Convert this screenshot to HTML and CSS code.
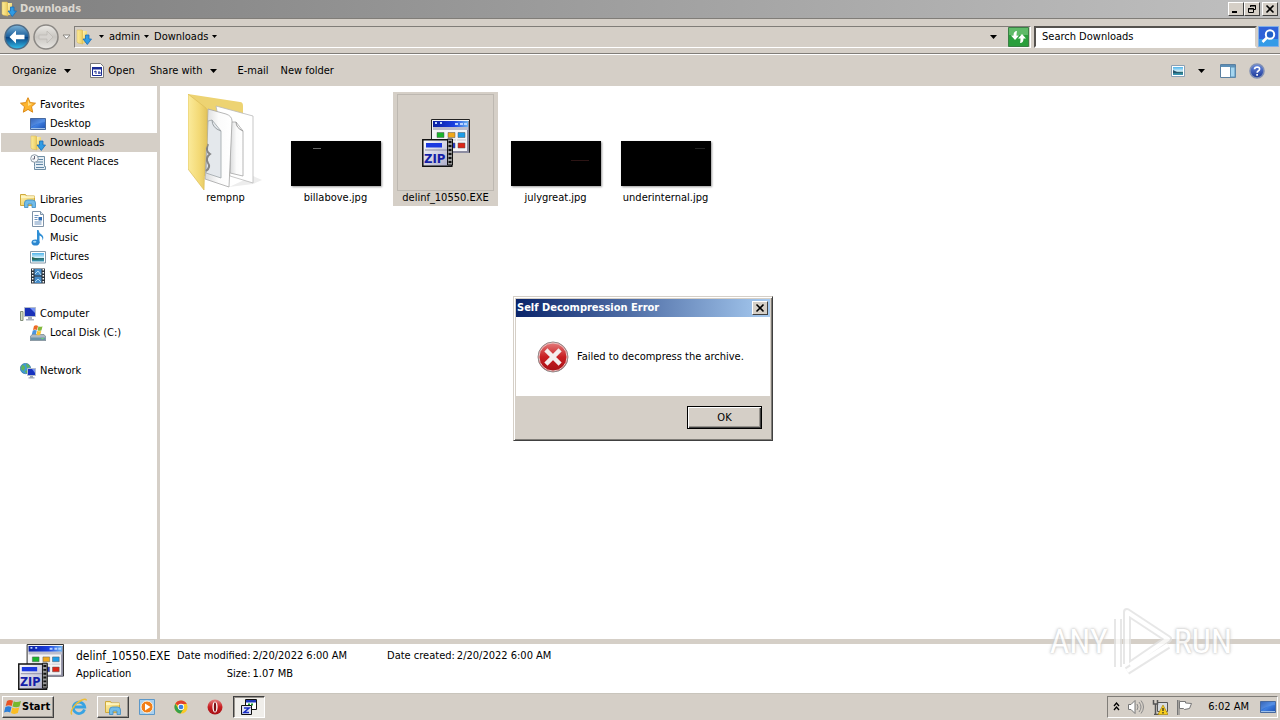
FILE: index.html
```
<!DOCTYPE html>
<html lang="en">
<head>
<meta charset="utf-8">
<title>Downloads</title>
<link rel="stylesheet" href="styles.css">
</head>
<body>
<svg class="sprite" width="0" height="0" aria-hidden="true">
  <defs>
    <linearGradient id="gFolder" x1="0" y1="0" x2="1" y2="1"><stop offset="0" stop-color="#fff3b0"/><stop offset="1" stop-color="#e6c04a"/></linearGradient>
    <linearGradient id="gFlap" x1="0" y1="0" x2="1" y2="0"><stop offset="0" stop-color="#fbeb9c"/><stop offset=".6" stop-color="#f3d975"/><stop offset="1" stop-color="#e3c45c"/></linearGradient>
    <linearGradient id="gPage" x1="0" y1="0" x2="1" y2="0"><stop offset="0" stop-color="#d9dadb"/><stop offset=".5" stop-color="#fbfbfb"/><stop offset="1" stop-color="#fff"/></linearGradient>
    <linearGradient id="gScreen" x1="0" y1="0" x2="1" y2="1"><stop offset="0" stop-color="#123c96"/><stop offset=".5" stop-color="#3f7fe0"/><stop offset="1" stop-color="#1a4db0"/></linearGradient>
    <linearGradient id="gGlobe" x1="0" y1="0" x2="0" y2="1"><stop offset="0" stop-color="#7db4d8"/><stop offset=".48" stop-color="#1c5f9c"/><stop offset=".52" stop-color="#0a4484"/><stop offset="1" stop-color="#35c2ee"/></linearGradient>
    <linearGradient id="gGrey" x1="0" y1="0" x2="0" y2="1"><stop offset="0" stop-color="#eceae6"/><stop offset=".5" stop-color="#c9c6c1"/><stop offset="1" stop-color="#e9e7e3"/></linearGradient>
    <linearGradient id="gBar" x1="0" y1="0" x2="1" y2="0"><stop offset="0" stop-color="#0a1fa0"/><stop offset=".6" stop-color="#1a3fe0"/><stop offset="1" stop-color="#6db4f0"/></linearGradient>
    <linearGradient id="gZip" x1="0" y1="0" x2="1" y2="1"><stop offset="0" stop-color="#fff"/><stop offset="1" stop-color="#a5a5c4"/></linearGradient>
    <linearGradient id="gRed" x1="0" y1="0" x2="0" y2="1"><stop offset="0" stop-color="#e58080"/><stop offset=".5" stop-color="#c81e22"/><stop offset="1" stop-color="#a50f14"/></linearGradient>
    <linearGradient id="gSky" x1="0" y1="0" x2="0" y2="1"><stop offset="0" stop-color="#4fb4ea"/><stop offset=".55" stop-color="#d8f1fa"/><stop offset=".6" stop-color="#2b6c6a"/><stop offset="1" stop-color="#3a9cc0"/></linearGradient>
    <linearGradient id="gHelp" x1="0" y1="0" x2="0" y2="1"><stop offset="0" stop-color="#6a8be0"/><stop offset="1" stop-color="#1b3796"/></linearGradient>
  </defs>
  <symbol id="i-down" viewBox="0 0 16 16"><path d="M1 1h5l1 1v13l-5-1-1-1z" fill="url(#gFlap)" stroke="#d9b64c" stroke-width=".5"/><path d="M7 2h4v12H7z" fill="url(#gFolder)"/><path d="M9.500 6h3.500v4h2.500L11.300 15.500 7 10h2.500z" fill="#2f9be4" stroke="#1b6db6" stroke-width=".8"/></symbol>
  <symbol id="i-star" viewBox="0 0 16 16"><path d="M8 .7l2.200 4.900 5.300.6-4 3.500 1.200 5.500L8 12.400l-4.700 2.800 1.200-5.500-4-3.500 5.300-.6z" fill="#fdb52e" stroke="#dc8a18"/><path d="M8 3l1.500 3.400 3 .4L8 9z" fill="#ffe08a"/></symbol>
  <symbol id="i-desk" viewBox="0 0 16 16"><path d="M.5 2.500h15v11H.5z" fill="url(#gScreen)" stroke="#47699f"/><path d="M1 12h14v1H1z" fill="#9fc0e8"/><path d="M1 3h14v3Q6 7 1 11z" fill="#7fb0f0" opacity=".35"/></symbol>
  <symbol id="i-recent" viewBox="0 0 16 16"><path d="M4.500 2.500h10v10h1v3h-11v-3z" fill="#e4edf4" stroke="#6f8ea5"/><path d="M6 8h7M6 10.500h7M8 5.500h5M6 13.500h8" stroke="#5f86a5"/><circle cx="4.500" cy="4.500" r="3.800" fill="#f7f9fb" stroke="#8d9aa5"/><path d="M4.500 2v3H2.500" fill="none" stroke="#667"/></symbol>
  <symbol id="i-lib" viewBox="0 0 16 16"><path d="M.5 13.500v-11h5l1 1.500h8v9.500z" fill="url(#gFolder)" stroke="#cfa93c"/><path d="M1 5h13.500" stroke="#fff8cc" stroke-width="1.500"/><path d="M4.500 15.500V11q0-3 3-3h5q3 0 3 3v4.500H12V12H8v3.500z" fill="#72bce8" stroke="#3f8cc4" stroke-width=".8"/></symbol>
  <symbol id="i-doc" viewBox="0 0 16 16"><path d="M2.500.5h8l3 3v12h-11z" fill="#fff" stroke="#7f93a8"/><path d="M10.500.5v3h3" fill="#d8e4ee" stroke="#7f93a8"/><path d="M4.500 4.500h4M4.500 6.500h3M4.500 8.500h3M4.500 11h7M4.500 13h7" stroke="#6f93bd"/><path d="M8.500 6h3.500v3.500H8.500z" fill="#2f6eb5"/></symbol>
  <symbol id="i-music" viewBox="0 0 16 16"><path d="M8.500 0q.5 3 3 4.500 3 2 1 6 .3-4-3-5V13H7V0z" fill="#2f8fd6"/><ellipse cx="5.500" cy="12.500" rx="4" ry="3.100" fill="#2b86cf"/><ellipse cx="4.700" cy="11.700" rx="1.700" ry="1" fill="#a7daf7"/></symbol>
  <symbol id="i-pic" viewBox="0 0 16 16"><path d="M.5 2.500h15v11.500H.5z" fill="#fff" stroke="#8699a8"/><path d="M2 4h12v8.500H2z" fill="url(#gSky)"/><path d="M2 8l3 1 4 1.500H2z" fill="#2d6650"/></symbol>
  <symbol id="i-vid" viewBox="0 0 16 16"><path d="M1 .5h14v15H1z" fill="#2a3138"/><path d="M4.500 1h7v6.500h-7zM4.500 8.500h7V15h-7z" fill="#468cc9"/><path d="M5 6l3-3 3 4M5 14l3-3 3 3" fill="none" stroke="#b3dcf4"/><path d="M2.700 1v15M13.300 1v15" stroke="#fff" stroke-width="1.500" stroke-dasharray="1.500 1.500"/></symbol>
  <symbol id="i-comp" viewBox="0 0 16 16"><path d="M4.500 1.500h11v9h-11z" fill="#1931b8" stroke="#b3bccb"/><path d="M10 2h5v5z" fill="#7290f2"/><path d="M8 11h4v2h2v1.500H6V13h2z" fill="#aab2c0"/><path d="M.5 5.500h2.500v9H.5z" fill="#d5dfc4" stroke="#83907a"/></symbol>
  <symbol id="i-disk" viewBox="0 0 16 16"><path d="M2 9.500h12l2 2.500v3.500H0V12z" fill="#aeb9c2" stroke="#6f7f8c" stroke-width=".7"/><path d="M.5 12.500h15v2.500H.5z" fill="#6c94a8"/><path d="M11.500 13h2v1h-2z" fill="#65e06a"/><path d="M4 1q2-1.500 4 0L7 5Q5 4 3 5z" fill="#ec6a25"/><path d="M8.500 1.200q2 1 4 0l-1 4q-2 1-4 0z" fill="#82b83a"/><path d="M2.800 5.500q2-1 4 0l-1 4q-2-1-4 0z" fill="#4a94dd"/><path d="M7.300 5.700q2 1 4 0l-1 4q-2 1-4 0z" fill="#f8c22e"/></symbol>
  <symbol id="i-net" viewBox="0 0 16 16"><circle cx="5.500" cy="5.500" r="5.200" fill="#3f9bd0" stroke="#336d98" stroke-width=".6"/><path d="M2 2q3 0 3 3L3.500 8 1 6zM6 1q3 0 4 3L7 5zM5 8l3-1v3H6z" fill="#5eb35a"/><path d="M7.500 5.500h8v7h-8z" fill="#1733c0" stroke="#b5bdcb"/><path d="M12 6h3v4z" fill="#7894f0"/><path d="M10 13h3v1.200h1.500v1.300h-6v-1.300H10z" fill="#9fa8b5"/></symbol>
  <symbol id="i-zip" viewBox="0 0 48 48"><path d="M9.500.5h38v33h-38z" fill="#f4f4f7" stroke="#222"/><path d="M46 2v31H10" fill="none" stroke="#8c8ca0" stroke-width="2"/><path d="M11 2h35v6H11z" fill="url(#gBar)"/><path d="M13 4h2M18 4h2M33 5h3M38 5h3M42 5h3" stroke="#b9d3ff" stroke-width="2"/><path d="M11 8h35v3H11z" fill="#bdbdcb"/><g stroke-width=".5" stroke="#555"><path d="M15 13.500h7v5h-7z" fill="#19b52b"/><path d="M26 13.500h7v5h-7z" fill="#f0a81a"/><path d="M36 13.500h7v5h-7z" fill="#1d9ce8"/><path d="M26 24h7v5h-7z" fill="#2437cc"/><path d="M36 24h7v5h-7z" fill="#dd2618"/></g><path d="M14 21h9M25 21h9M35 21h9" stroke="#c5c5cc"/><path d="M.8 20.800h29v26.500H.8z" fill="url(#gZip)" stroke="#111" stroke-width="1.500"/><path d="M4 24h16v4.500H4z" fill="#1c3ae0"/><path d="M3 31h22" stroke="#8c8ca6"/><path d="M25.500 20h5v26h-5z" fill="#999" stroke="#111"/><path d="M28 22v24" stroke="#111" stroke-width="3" stroke-dasharray="2 2"/></symbol>
  <symbol id="i-flag" viewBox="0 0 18 18"><path d="M3 3q3-2 6-.2L7.700 8Q5 6.500 1.700 8z" fill="#e85324"/><path d="M9.800 3.200Q13 5 17 3l-1.500 5.500Q12 10 8.500 8.400z" fill="#76b82e"/><path d="M1.400 9Q4.500 7.500 7.500 9l-1.300 5.500Q3.500 13 0 14.500z" fill="#2c7fd8"/><path d="M8.300 9.400q3.500 1.800 6.900.2l-1.400 5.500q-3.500 1.700-6.800-.2z" fill="#fbbd23"/></symbol>
</svg>

<div class="window">
  <header class="titlebar">
    <svg class="ico"><use href="#i-down"/></svg>
    <h1 class="caption">Downloads</h1>
    <div class="winbtns">
      <button class="winbtn" aria-label="Minimize"><svg width="10" height="10"><path d="M1 8h5" stroke="#000" stroke-width="2"/></svg></button>
      <button class="winbtn" aria-label="Restore"><svg width="10" height="10" fill="none" stroke="#000"><path d="M3.500 3V1.500h5v4H7M3 2h6M1.500 4.500h5v4h-5zM1 5h6"/></svg></button>
      <button class="winbtn close" aria-label="Close"><svg width="10" height="10"><path d="M1.500 1.500l7 7m0-7l-7 7" stroke="#000" stroke-width="1.600"/></svg></button>
    </div>
  </header>

  <div class="navbar">
    <div class="travel">
      <button class="plain" aria-label="Back"><svg width="26" height="26" viewBox="0 0 26 26"><circle cx="13" cy="13" r="12" fill="url(#gGlobe)" stroke="#4f6c86" stroke-width="1.500"/><path d="M12 6.500L5.500 13l6.500 6.500v-4.200h8.500v-4.600H12z" fill="#fff"/></svg></button>
      <button class="plain" aria-label="Forward"><svg width="26" height="26" viewBox="0 0 26 26"><circle cx="13" cy="13" r="12" fill="url(#gGrey)" stroke="#8b8884" stroke-width="1.500"/><path d="M14 7l6 6-6 6v-4H6v-4h8z" fill="#d6d3cf" stroke="#bab7b2" stroke-width=".7"/></svg></button>
      <button class="plain" aria-label="Recent pages"><svg width="9" height="6"><path d="M1 1h7L4.500 5z" fill="#fff" stroke="#8a8781"/></svg></button>
    </div>
    <nav class="address" aria-label="Address">
      <svg class="ico"><use href="#i-down"/></svg>
      <svg class="caret first" viewBox="0 0 5 3"><path d="M0 0h5L2.500 3z"/></svg>
      <a href="#admin">admin</a>
      <svg class="caret" viewBox="0 0 5 3"><path d="M0 0h5L2.500 3z"/></svg>
      <a href="#downloads">Downloads</a>
      <svg class="caret" viewBox="0 0 5 3"><path d="M0 0h5L2.500 3z"/></svg>
      <span class="grow"></span>
      <button class="plain history" aria-label="Previous locations"><svg class="arrow" viewBox="0 0 7 4"><path d="M0 0h7L3.500 4z"/></svg></button>
      <button class="plain" aria-label="Refresh"><svg width="21" height="20" viewBox="0 0 21 20"><path d="M.5.5h20v19H.5z" fill="#2a9f3c" stroke="#3b7f45"/><path d="M1 1h19v7H1z" fill="#8bd08d" opacity=".55"/><path d="M9 4Q5.500 4 5.500 8.500H3L7 13l4-4.500H8.500Q8.500 6 9 4zM12 16q3.500 0 3.500-4.500H18L14 7l-4 4.500h2.500Q12.500 14 12 16z" fill="#fff"/></svg></button>
    </nav>
    <div class="search">
      <input class="searchbox" type="text" value="Search Downloads" aria-label="Search Downloads">
      <button class="plain" aria-label="Search"><svg width="21" height="21" viewBox="0 0 21 21"><path d="M.5.5h20v20H.5z" fill="#2f62d8" stroke="#7faee8"/><path d="M1 13h19v7H1z" fill="#35b4ee" opacity=".7"/><circle cx="12" cy="8.500" r="4.200" fill="#2160c8" stroke="#fff" stroke-width="2"/><path d="M9 11.500L4.500 16" stroke="#fff" stroke-width="2.500"/></svg></button>
    </div>
  </div>

  <div class="toolbar">
    <button class="tool">Organize <svg class="arrow" viewBox="0 0 7 4"><path d="M0 0h7L3.500 4z"/></svg></button>
    <button class="tool open"><svg width="14" height="15" viewBox="0 0 14 15"><path d="M.5.500h10l3 3v11H.5z" fill="#fff" stroke="#777"/><path d="M2.500 4.500h9v8h-9z" fill="#fff" stroke="#1a2c94"/><path d="M2 4h10v2.500H2z" fill="#1a2c94"/><path d="M4 9l2-1v3M9 8v3M8 10h3" stroke="#1a2c94" fill="none"/></svg>Open</button>
    <button class="tool">Share with <svg class="arrow" viewBox="0 0 7 4"><path d="M0 0h7L3.500 4z"/></svg></button>
    <button class="tool email">E-mail</button>
    <button class="tool">New folder</button>
    <span class="grow"></span>
    <div class="viewtools">
      <button class="plain" aria-label="Change view"><svg width="14" height="12" viewBox="0 0 14 12"><path d="M.5.5h13v11H.5z" fill="#fff" stroke="#8aa0b4"/><path d="M2 2h10v8H2z" fill="url(#gSky)"/><path d="M2 5l4 2 6 1H2z" fill="#25546c"/></svg></button>
      <button class="plain" aria-label="More view options"><svg class="arrow" viewBox="0 0 7 4"><path d="M0 0h7L3.500 4z"/></svg></button>
      <button class="plain preview" aria-label="Show the preview pane"><svg width="16" height="14" viewBox="0 0 16 14"><path d="M.5.5h15v13H.5z" fill="#fff" stroke="#5a7f9f"/><path d="M1 1h14v2H1z" fill="#5b8fb8"/><path d="M10.500 3h4.500v10h-4.500z" fill="#a6d6ef" stroke="#5e93b8"/></svg></button>
      <button class="plain" aria-label="Help"><svg width="16" height="16" viewBox="0 0 16 16"><circle cx="8" cy="8" r="7" fill="url(#gHelp)" stroke="#7f8fb5" stroke-width="1.500"/><path d="M5.500 6.300Q5.700 4 8.200 4q2.400.1 2.400 2 0 1.200-1.400 2-1 .6-1 1.700M8.100 11v1.700" fill="none" stroke="#fff" stroke-width="1.700"/></svg></button>
    </div>
  </div>

  <main class="panes">
    <nav class="tree" aria-label="Folders">
      <ul class="group">
        <li><a href="#fav" class="node"><svg class="ico"><use href="#i-star"/></svg>Favorites</a></li>
        <li><a href="#desktop" class="node sub"><svg class="ico"><use href="#i-desk"/></svg>Desktop</a></li>
        <li><a href="#downloads" class="node sub current"><svg class="ico"><use href="#i-down"/></svg>Downloads</a></li>
        <li><a href="#recent" class="node sub"><svg class="ico"><use href="#i-recent"/></svg>Recent Places</a></li>
      </ul>
      <ul class="group">
        <li><a href="#lib" class="node"><svg class="ico"><use href="#i-lib"/></svg>Libraries</a></li>
        <li><a href="#docs" class="node sub"><svg class="ico"><use href="#i-doc"/></svg>Documents</a></li>
        <li><a href="#music" class="node sub"><svg class="ico"><use href="#i-music"/></svg>Music</a></li>
        <li><a href="#pics" class="node sub"><svg class="ico"><use href="#i-pic"/></svg>Pictures</a></li>
        <li><a href="#vids" class="node sub"><svg class="ico"><use href="#i-vid"/></svg>Videos</a></li>
      </ul>
      <ul class="group">
        <li><a href="#comp" class="node"><svg class="ico"><use href="#i-comp"/></svg>Computer</a></li>
        <li><a href="#c" class="node sub"><svg class="ico"><use href="#i-disk"/></svg>Local Disk (C:)</a></li>
      </ul>
      <ul class="group">
        <li><a href="#net" class="node"><svg class="ico"><use href="#i-net"/></svg>Network</a></li>
      </ul>
    </nav>
    <ul class="files">
      <li class="file">
        <div class="frame"><svg width="76" height="97" viewBox="0 0 76 97"><path d="M65 82l9 4-9 4-24 3z" fill="#ededed"/><path d="M0 0l52 8q3 0 3 4v70H16z" fill="#edd372"/><path d="M28 12l37 10v67l-23-7z" fill="#fff" stroke="#b9b9b9" stroke-width=".8"/><path d="M43 28h5l7 9v45l-13-3z" fill="url(#gPage)" stroke="#a5a5a5" stroke-width=".8"/><path d="M48 28q0 6 7 9" fill="none" stroke="#999"/><path d="M20 15l18 5q6 2 6 7l-3 66-24-8z" fill="url(#gPage)" stroke="#a5a5a5" stroke-width=".8"/><path d="M20 27l4-1 9 11v47l-15-5z" fill="#e4e8ec" stroke="#9da4a8" stroke-width=".8"/><path d="M24 26q0 8 9 11" fill="none" stroke="#999fa3"/><path d="M20 50q-3 7 2 10-5 4-2 9 3 4-2 8" fill="none" stroke="#858585" stroke-width="2"/><path d="M0 0l18 14q1 1 1 4v33q-3 4-2 10l-1 35L0 75z" fill="url(#gFlap)" stroke="#dcbd58" stroke-width=".7"/></svg></div>
        <span class="fname">rempnp</span>
      </li>
      <li class="file"><div class="frame"><svg class="thumb" viewBox="0 0 90 45"><path d="M22 7.500h8" stroke="#666"/></svg></div><span class="fname">billabove.jpg</span></li>
      <li class="file selected"><div class="frame"><svg width="48" height="48" viewBox="0 0 48 48"><use href="#i-zip" width="48" height="48"/><text x="2" y="44" class="zip-word">ZIP</text></svg></div><span class="fname">delinf_10550.EXE</span></li>
      <li class="file"><div class="frame"><svg class="thumb" viewBox="0 0 90 45"><path d="M60 19.500h18" stroke="#2c1414"/></svg></div><span class="fname">julygreat.jpg</span></li>
      <li class="file"><div class="frame"><svg class="thumb" viewBox="0 0 90 45"><path d="M74 7.500h10" stroke="#222"/></svg></div><span class="fname">underinternal.jpg</span></li>
    </ul>
  </main>

  <section class="details" aria-label="Details">
    <svg width="46" height="46" viewBox="0 0 48 48"><use href="#i-zip" width="48" height="48"/><text x="2" y="44" class="zip-word">ZIP</text></svg>
    <div class="what"><strong class="fileid">delinf_10550.EXE</strong><span>Application</span></div>
    <dl class="facts"><dt>Date modified:</dt><dd>2/20/2022 6:00 AM</dd><dt>Size:</dt><dd>1.07 MB</dd></dl>
    <dl class="facts created"><dt>Date created:</dt><dd>2/20/2022 6:00 AM</dd></dl>
  </section>
</div>

<footer class="taskbar">
  <button class="start"><svg width="18" height="18"><use href="#i-flag"/></svg>Start</button>
  <div class="tasks">
    <button class="task" aria-label="Internet Explorer"><svg width="18" height="18" viewBox="0 0 18 18"><path d="M14.500 11.500A5.700 5.700 0 1 1 14.700 9H5" fill="none" stroke="#37a3e3" stroke-width="2.800"/><path d="M2 16.500C-1 14 5 5 12 2q4-1.800 4.500.5" fill="none" stroke="#edbd36" stroke-width="1.400"/></svg></button>
    <button class="task raised" aria-label="Downloads"><svg width="16" height="16"><use href="#i-lib"/></svg></button>
    <button class="task" aria-label="Media Player"><svg width="16" height="16" viewBox="0 0 16 16"><path d="M.5.500h15v15H.5z" fill="#a9d0ef" stroke="#5c98c9"/><circle cx="8" cy="8" r="6" fill="#f27e17" stroke="#fff3df"/><path d="M6 4.500l5.500 3.500L6 11.500z" fill="#fff"/></svg></button>
    <button class="task" aria-label="Chrome"><svg width="14" height="14" viewBox="0 0 16 16"><circle cx="8" cy="8" r="7.500" fill="#fbc926"/><path d="M8 8L1.500 4.200A7.500 7.500 0 0 1 14.600 4.500H8z" fill="#e0402f"/><path d="M1.500 4.200A7.500 7.500 0 0 0 7.500 15.500L11 10 8 8l-3 2z" fill="#36a04c"/><circle cx="8" cy="8" r="3.600" fill="#fff"/><circle cx="8" cy="8" r="2.700" fill="#3c7fe0"/></svg></button>
    <button class="task" aria-label="Opera"><svg width="16" height="16" viewBox="0 0 16 16"><circle cx="8" cy="8" r="7.500" fill="url(#gRed)"/><ellipse cx="8" cy="8" rx="2.600" ry="5.500" fill="#fff"/><ellipse cx="8" cy="8" rx="1.200" ry="4.800" fill="#7c1014"/></svg></button>
    <button class="task pressed" aria-label="Self Decompression Error"><svg width="16" height="16" viewBox="0 0 16 16"><path d="M4.500.5h11v10h-11z" fill="#fff" stroke="#111"/><path d="M5 1h10v2.500H5z" fill="#1a35b8"/><path d="M7 5.500h2M10 5.500h2" stroke="#1aa02c" stroke-width="2"/><path d="M.5 6.500h10v9H.5z" fill="#dfe2f5" stroke="#111"/><path d="M3 9h5l-5 4.500h5" fill="none" stroke="#1a2cc0" stroke-width="1.600"/></svg></button>
  </div>
  <span class="grow"></span>
  <div class="tray">
    <button class="plain chevrons" aria-label="Show hidden icons"><svg width="7" height="9" fill="none" stroke="#000" stroke-width="1.300"><path d="M1 4l2.500-3L6 4M1 8l2.500-3L6 8"/></svg></button>
    <svg class="ico" viewBox="0 0 16 16"><path d="M.5 5.500H3l4-4v13l-4-4H.5z" fill="#fff" stroke="#777"/><path d="M9 5q2 3 0 6M11 3q4 5 0 10M13 1.500q5 6.500 0 13" fill="none" stroke="#8a8a8a"/></svg>
    <svg class="ico" viewBox="0 0 16 16"><path d="M5.500 3.500h10v9h-10z" fill="#d8dce0" stroke="#555"/><path d="M1.500 1v4h4V1M3.500 5v10M2 15.500h5" fill="none" stroke="#555" stroke-width="1.500"/><path d="M11 6l5 9.500H6z" fill="#f8ce1c" stroke="#a98508" stroke-width=".7"/><path d="M11 9v3M11 13v1.500" stroke="#222" stroke-width="1.200"/></svg>
    <svg class="ico" viewBox="0 0 16 16"><path d="M1.500 1v15M3 1v15" stroke="#777"/><path d="M3.500 2.500h6v1.500l6 .5-2 5-5 1-1-1h-4z" fill="#fff" stroke="#777"/></svg>
    <time class="clock">6:02 AM</time>
    <button class="plain" aria-label="Show desktop"><svg class="ico"><use href="#i-desk"/></svg></button>
  </div>
</footer>

<div class="dialog" role="alertdialog" aria-labelledby="dlg-title" aria-describedby="dlg-text">
  <div class="dlg-title"><h2 class="caption" id="dlg-title">Self Decompression Error</h2><button class="winbtn" aria-label="Close"><svg width="10" height="10"><path d="M1.500 1.500l7 7m0-7l-7 7" stroke="#000" stroke-width="1.600"/></svg></button></div>
  <div class="dlg-body">
    <svg width="32" height="32" viewBox="0 0 32 32"><circle cx="16" cy="16" r="15" fill="url(#gRed)" stroke="#8d8d8d"/><circle cx="16" cy="16" r="14" fill="none" stroke="#e9c3c3"/><path d="M10.500 10.500l11 11m0-11l-11 11" stroke="#f4eded" stroke-width="4.500" stroke-linecap="square"/></svg>
    <p class="dlg-text" id="dlg-text">Failed to decompress the archive.</p>
  </div>
  <div class="dlg-foot"><button class="ok">OK</button></div>
</div>

<div class="watermark">
  <span class="brand">ANY</span>
  <svg width="62" height="70" viewBox="0 0 62 70" fill="none" stroke-linejoin="round"><g stroke="#e2e2e2" stroke-width="8"><path d="M8 61V13M17 58V6l41 27-38 26M17 65l41-26"/></g><g stroke="#fff" stroke-width="4"><path d="M8 61V13M17 58V6l41 27-38 26M17 65l41-26"/></g></svg>
  <span class="brand">RUN</span>
</div>
</body>
</html>
```
FILE: styles.css
```
* { box-sizing: border-box; }
:root { --face: #d5cfc7; --dark: #807d78; }
body {
  margin: 0;
  height: 100vh;
  display: flex;
  flex-direction: column;
  position: relative;
  overflow: hidden;
  background: #fff;
  color: #000;
  font: 11px/14px "DejaVu Sans Condensed", Tahoma, "DejaVu Sans", sans-serif;
}
button, input { font: inherit; color: inherit; }
a { color: inherit; text-decoration: none; }
ul, dl, dd, p, h1, h2 { margin: 0; padding: 0; list-style: none; }
svg { display: block; flex: none; }
.sprite { position: absolute; }
.ico { width: 16px; height: 16px; }
.grow { flex: 1; }
.plain { border: 0; padding: 0; background: none; display: flex; align-items: center; }
.arrow { width: 7px; height: 4px; }
.caret { width: 5px; height: 3px; margin: 0 5px 0 4px; }
.caret.first { margin-left: 7px; }

.window { flex: 1; min-height: 0; display: flex; flex-direction: column; }
.titlebar {
  height: 18px;
  display: flex;
  align-items: center;
  gap: 3px;
  padding: 0 2px 0 1px;
  background: linear-gradient(90deg, #808080, #c0c0c0);
}
.caption { font-size: 11px; font-weight: bold; line-height: 14px; flex: 1; }
.titlebar .caption { color: #dcd8d0; }
.winbtns { display: flex; }
.winbtn {
  width: 16px;
  height: 14px;
  padding: 0;
  display: flex;
  align-items: center;
  justify-content: center;
  background: var(--face);
  border: 1px solid;
  border-color: #fff #404040 #404040 #fff;
}
.winbtn.close { margin-left: 2px; }

.navbar {
  height: 36px;
  display: flex;
  align-items: center;
  gap: 3px;
  padding: 1px 1px 0 4px;
  background: var(--face);
  border-top: 1px solid var(--dark);
  border-bottom: 1px solid var(--dark);
}
.travel { display: flex; align-items: center; gap: 3px; width: 67px; }
.address {
  flex: 1;
  height: 22px;
  display: flex;
  align-items: center;
  padding: 0 1px;
  border: 1px solid;
  border-color: var(--dark) #fff #fff var(--dark);
}
.history { margin-right: 11px; }
.search { display: flex; align-items: center; gap: 1px; width: 245px; }
.searchbox {
  flex: 1;
  min-width: 0;
  height: 22px;
  padding: 0 6px;
  background: #fff;
  border: 2px solid;
  border-color: #55524e var(--face) #fff #55524e;
  outline: 0;
}

.toolbar {
  height: 32px;
  display: flex;
  align-items: center;
  padding: 0 15px 0 12px;
  background: var(--face);
  border-top: 1px solid #fff;
}
.tool { display: flex; align-items: center; gap: 8px; border: 0; padding: 0; margin-right: 20px; background: none; }
.tool.open { gap: 4px; margin: 0 15px 0 -1px; }
.tool.email { margin-right: 12px; }
.viewtools { display: flex; align-items: center; gap: 13px; }
.preview { margin-left: 2px; }

.panes { flex: 1; min-height: 0; display: flex; }
.tree {
  flex: none;
  width: 160px;
  padding: 9px 0 0 1px;
  border-right: 3px solid var(--face);
  display: flex;
  flex-direction: column;
  gap: 19px;
}
.node { display: flex; align-items: center; gap: 4px; height: 19px; padding-left: 19px; }
.node.sub { padding-left: 29px; }
.node.current { background: var(--face); }
.files { flex: 1; display: flex; flex-wrap: wrap; align-content: flex-start; gap: 5px; padding: 6px 13px; }
.file { width: 105px; height: 114px; display: flex; flex-direction: column; align-items: center; padding-top: 2px; }
.frame { width: 97px; height: 97px; display: flex; align-items: flex-end; justify-content: center; }
.thumb { width: 90px; height: 45px; margin-bottom: 5px; background: #000; box-shadow: 1px 1px 2px #999; }
.selected { background: var(--face); }
.selected .frame { align-items: center; border: 1px solid #bdb8b1; }
.fname { white-space: nowrap; line-height: 13px; }
.zip-word { font: bold 13px "DejaVu Sans Condensed", sans-serif; fill: #1420a8; }

.details {
  height: 54px;
  flex: none;
  display: flex;
  padding-left: 18px;
  gap: 5px;
  background: #fff;
  border-top: 5px solid var(--face);
}
.what { width: 96px; margin-left: 7px; display: flex; flex-direction: column; gap: 4px; padding-top: 5px; white-space: nowrap; }
.fileid { font-weight: normal; font-size: 12px; }
.facts { display: grid; grid-template-columns: auto auto; grid-auto-rows: 14px; gap: 4px 2px; padding-top: 5px; white-space: nowrap; }
.facts dt { text-align: right; }
.created { margin-left: 35px; }

.taskbar {
  flex: none;
  height: 27px;
  display: flex;
  align-items: center;
  padding: 1px 2px 2px;
  background: var(--face);
  border-top: 1px solid #c9c5bc;
}
.start {
  width: 52px;
  height: 22px;
  display: flex;
  align-items: center;
  padding: 0 1px;
  font-weight: bold;
  background: var(--face);
  border: 1px solid;
  border-color: #fff #404040 #404040 #fff;
  box-shadow: inset -1px -1px #98948e;
}
.tasks { display: flex; gap: 2px; margin-left: 9px; }
.task {
  width: 32px;
  height: 22px;
  display: flex;
  align-items: center;
  justify-content: center;
  padding: 0;
  background: none;
  border: 1px solid transparent;
}
.raised { border-color: #fff #404040 #404040 #fff; box-shadow: inset -1px -1px #98948e; }
.pressed { background: #f0eeea; border-color: #404040 #fff #fff #404040; box-shadow: inset 1px 1px #98948e; }
.tray {
  height: 22px;
  display: flex;
  align-items: center;
  gap: 8px;
  padding: 0 1px 0 5px;
  border: 1px solid;
  border-color: var(--dark) #fff #fff var(--dark);
}
.clock { margin: 0 3px 0 8px; }

.dialog {
  position: absolute;
  left: 513px;
  top: 296px;
  width: 260px;
  padding: 2px;
  background: var(--face);
  border: 1px solid;
  border-color: var(--face) #404040 #404040 var(--face);
  box-shadow: inset 1px 1px #fff, inset -1px -1px var(--dark);
}
.dlg-title {
  height: 18px;
  display: flex;
  align-items: center;
  padding: 0 2px 0 1px;
  color: #fff;
  background: linear-gradient(90deg, #0a246a, #a6caf0);
}
.dlg-body { display: flex; align-items: center; gap: 8px; height: 79px; padding-left: 21px; background: #fff; }
.dlg-foot { display: flex; justify-content: flex-end; padding: 10px 8px 9px 0; }
.ok {
  width: 75px;
  height: 23px;
  padding: 0;
  background: var(--face);
  border: 1px solid #000;
  box-shadow: inset 1px 1px #fff, inset -1px -1px #404040, inset -2px -2px #98948e;
}

.watermark {
  position: absolute;
  right: 48px;
  bottom: 44px;
  display: flex;
  align-items: center;
  gap: 2px;
  opacity: .8;
  pointer-events: none;
}
.brand {
  font: 34px/44px "Roboto Condensed", "DejaVu Sans Condensed", sans-serif;
  color: #fff;
  text-shadow: 0 0 2px #bbb, 0 0 3px #ccc, 0 0 4px #ddd;
}
```
